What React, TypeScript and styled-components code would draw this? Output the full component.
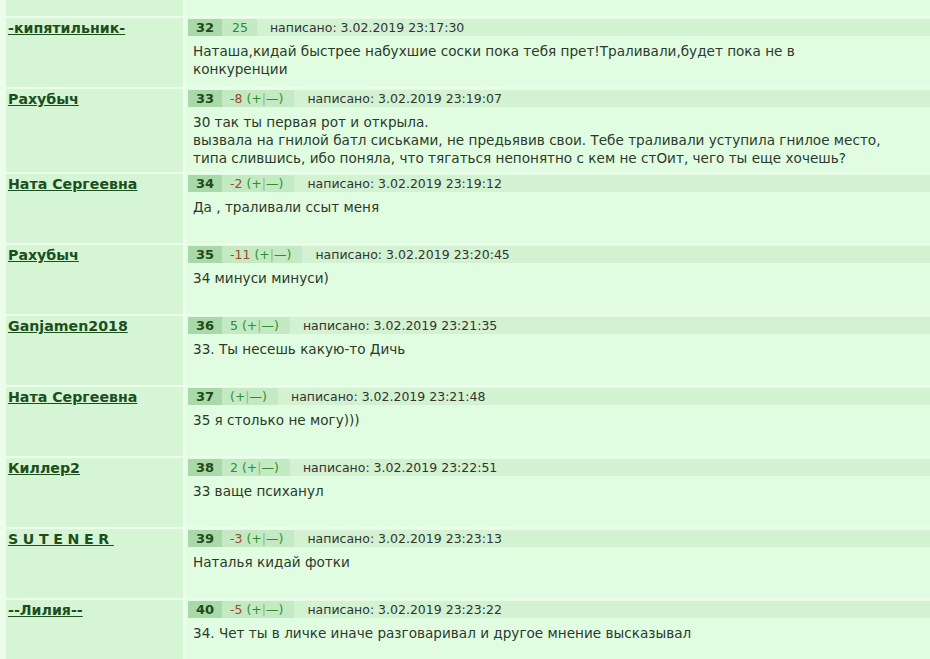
import styled, { createGlobalStyle } from "styled-components";
import { Fragment } from "react";

const GlobalStyle = createGlobalStyle`
  html, body {
    margin: 0;
    padding: 0;
    overflow: hidden;
    background: #ecfdec;
    font-family: "DejaVu Sans", Verdana, sans-serif;
  }
`;

type Comment = {
  id: number;
  author: string;
  spaced?: boolean;
  rating: number | null;
  voting: boolean;
  date: string;
  lines: string[];
};

const comments: Comment[] = [
  {
    id: 32,
    author: "-кипятильник-",
    rating: 25,
    voting: false,
    date: "3.02.2019 23:17:30",
    lines: [
      "Наташа,кидай быстрее набухшие соски пока тебя прет!Траливали,будет пока не в",
      "конкуренции",
    ],
  },
  {
    id: 33,
    author: "Рахубыч",
    rating: -8,
    voting: true,
    date: "3.02.2019 23:19:07",
    lines: [
      "30 так ты первая рот и открыла.",
      "вызвала на гнилой батл сиськами, не предьявив свои. Тебе траливали уступила гнилое место,",
      "типа слившись, ибо поняла, что тягаться непонятно с кем не стОит, чего ты еще хочешь?",
    ],
  },
  {
    id: 34,
    author: "Ната Сергеевна",
    rating: -2,
    voting: true,
    date: "3.02.2019 23:19:12",
    lines: ["Да , траливали ссыт меня"],
  },
  {
    id: 35,
    author: "Рахубыч",
    rating: -11,
    voting: true,
    date: "3.02.2019 23:20:45",
    lines: ["34 минуси минуси)"],
  },
  {
    id: 36,
    author: "Ganjamen2018",
    rating: 5,
    voting: true,
    date: "3.02.2019 23:21:35",
    lines: ["33. Ты несешь какую-то Дичь"],
  },
  {
    id: 37,
    author: "Ната Сергеевна",
    rating: null,
    voting: true,
    date: "3.02.2019 23:21:48",
    lines: ["35 я столько не могу)))"],
  },
  {
    id: 38,
    author: "Киллер2",
    rating: 2,
    voting: true,
    date: "3.02.2019 23:22:51",
    lines: ["33 ваще психанул"],
  },
  {
    id: 39,
    author: "SUTENER",
    spaced: true,
    rating: -3,
    voting: true,
    date: "3.02.2019 23:23:13",
    lines: ["Наталья кидай фотки"],
  },
  {
    id: 40,
    author: "--Лилия--",
    rating: -5,
    voting: true,
    date: "3.02.2019 23:23:22",
    lines: ["34. Чет ты в личке иначе разговаривал и другое мнение высказывал"],
  },
];

const Thread = styled.div`
  display: grid;
  grid-template-columns: 177px 1fr;
  column-gap: 3px;
  row-gap: 2px;
  padding-left: 6px;
  width: calc(100% + 40px);
`;

const AuthorCell = styled.div<{ $tail?: boolean }>`
  background: #d5f5d5;
  min-height: ${(p) => (p.$tail ? "16px" : "69px")};
  padding: 0 2px;
  box-sizing: border-box;
`;

const PostCell = styled.div<{ $tail?: boolean }>`
  background: #e1fde1;
  min-height: ${(p) => (p.$tail ? "16px" : "69px")};
  padding: 1px 0 0 2px;
  box-sizing: border-box;
`;

const AuthorLink = styled.a<{ $spaced?: boolean }>`
  display: inline-block;
  font-size: 14.2px;
  line-height: 17px;
  font-weight: bold;
  color: #1c4f1c;
  text-decoration: underline;
  letter-spacing: ${(p) => (p.$spaced ? "4.6px" : "0")};
  cursor: pointer;
`;

const MetaBar = styled.div`
  display: flex;
  align-items: stretch;
  height: 17px;
  background: #d2f2d2;
  font-size: 12.5px;
  line-height: 17px;
  color: #333;
`;

const PostNumber = styled.span`
  width: 34px;
  text-align: center;
  background: #a9d9a9;
  color: #1e4a1e;
  font-weight: bold;
  font-size: 13px;
`;

const RatingBox = styled.span<{ $solo: boolean }>`
  background: #c4eac4;
  padding: ${(p) => (p.$solo ? "0 9px 0 10px" : "0 11px 0 8px")};
  white-space: nowrap;
`;

const Score = styled.span<{ $negative: boolean; $solo: boolean }>`
  color: ${(p) => (p.$negative ? "#a3452a" : "#2f8a2f")};
  margin-right: ${(p) => (p.$solo ? "0" : "4px")};
`;

const Vote = styled.span`
  color: #2f8f2f;
`;

const VoteSep = styled.span`
  color: #8ab88a;
`;

const Posted = styled.span`
  padding-left: 13px;
  white-space: nowrap;
`;

const Body = styled.div`
  padding: 6px 5px 5px;
  font-size: 13.6px;
  line-height: 18px;
  color: #2c392c;
  white-space: nowrap;
`;

const Rating = ({ value, voting }: { value: number | null; voting: boolean }) => (
  <RatingBox $solo={!voting}>
    {value !== null && (
      <Score $negative={value < 0} $solo={!voting}>
        {value}
      </Score>
    )}
    {voting && (
      <Vote>
        (+<VoteSep>|</VoteSep>—)
      </Vote>
    )}
  </RatingBox>
);

export default function App() {
  return (
    <>
      <GlobalStyle />
      <Thread>
        <AuthorCell $tail />
        <PostCell $tail />
        {comments.map((c) => (
          <Fragment key={c.id}>
            <AuthorCell>
              <AuthorLink $spaced={c.spaced}>{c.author}</AuthorLink>
            </AuthorCell>
            <PostCell>
              <MetaBar>
                <PostNumber>{c.id}</PostNumber>
                <Rating value={c.rating} voting={c.voting} />
                <Posted>написано: {c.date}</Posted>
              </MetaBar>
              <Body>
                {c.lines.map((line, i) => (
                  <div key={i}>{line}</div>
                ))}
              </Body>
            </PostCell>
          </Fragment>
        ))}
      </Thread>
    </>
  );
}
